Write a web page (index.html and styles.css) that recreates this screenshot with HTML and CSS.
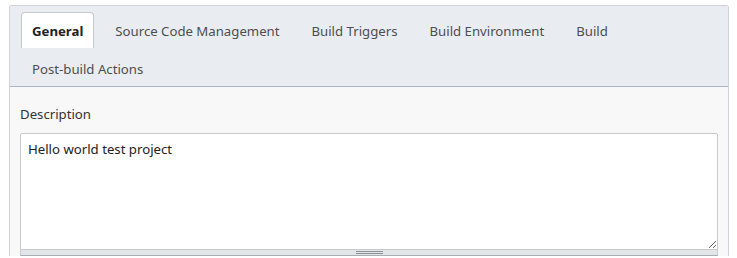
FILE: index.html
```html
<html lang="en">
<head>
    <meta charset="UTF-8">
    <title>Job configuration</title>
    <link rel="stylesheet" href="styles.css">
</head>
<body>
    <div class="config-panel">
        <!-- Section tabs -->
        <ul class="tab-bar">
            <li class="tab active">General</li>
            <li class="tab">Source Code Management</li>
            <li class="tab">Build Triggers</li>
            <li class="tab">Build Environment</li>
            <li class="tab">Build</li>
            <li class="tab">Post-build Actions</li>
        </ul>

        <div class="section-body">
            <label class="field-label" for="description">Description</label>
            <textarea id="description" class="field-text">Hello world test project</textarea>
            <div class="grip-bar"><span class="grip"></span></div>
        </div>
    </div>
</body>
</html>
```

FILE: styles.css
```css
body {
    margin: 0;
    padding: 5px 8px 0 9px;
    font-family: "Noto Sans", sans-serif;
    font-size: 13.2px;
    color: #333;
    background-color: #fff;
}

.config-panel {
    border: 1px solid #cfd2d6;
    border-bottom: none;
    border-radius: 3px 3px 0 0;
    background-color: #f8f8f8;
}

.tab-bar {
    list-style: none;
    margin: 0;
    padding: 6px 11px 0;
    display: flex;
    flex-wrap: wrap;
    column-gap: 10px;
    row-gap: 2px;
    background-color: #e9edf1;
    border-bottom: 1px solid #a9b5c6;
}

.tab {
    height: 36px;
    line-height: 36px;
    padding: 0 10px;
    color: #4d4d4d;
    border: 1px solid transparent;
    border-bottom: none;
    border-radius: 4px 4px 0 0;
    box-sizing: border-box;
}

.tab.active {
    background-color: #fff;
    border-color: #c3c8cf;
    color: #222;
    font-weight: bold;
}

.section-body {
    padding: 18px 10px 0 10px;
}

.field-label {
    display: block;
    color: #333;
    margin-bottom: 10px;
}

.field-text {
    display: block;
    box-sizing: border-box;
    width: 100%;
    height: 117px;
    margin: 0;
    padding: 6px 7px;
    font-family: "Noto Sans", sans-serif;
    font-size: 13.2px;
    color: #222;
    background-color: #fff;
    border: 1px solid #c7c9cc;
    border-radius: 2px 2px 0 0;
}

.grip-bar {
    height: 5px;
    background-color: #e3e6e9;
    border: 1px solid #c7c9cc;
    border-top: none;
    border-bottom-color: #a8aeb5;
    display: flex;
    justify-content: center;
    align-items: center;
}

.grip {
    width: 27px;
    height: 1px;
    border-top: 1px solid #8d9196;
    border-bottom: 1px solid #8d9196;
}
```
